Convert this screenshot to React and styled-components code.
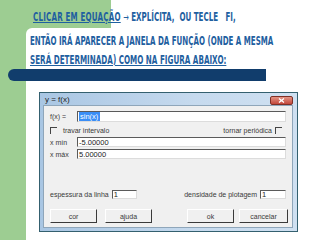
import React from "react";
import styled, { createGlobalStyle } from "styled-components";

const Global = createGlobalStyle`
  html, body { margin: 0; padding: 0; background: #fff; }
  body { width: 320px; height: 240px; overflow: hidden; }
`;

const GREEN = "#9dcd92";

const Page = styled.div`
  width: 320px;
  height: 240px;
  display: flex;
  flex-direction: column;
  background: #fff;
  overflow: hidden;
`;

const TopRow = styled.div`
  height: 28px;
  flex: none;
  box-sizing: border-box;
  padding: 7px 0 0 33px;
  background: linear-gradient(to right, ${GREEN} 0, ${GREEN} 111px, #fff 111px);
`;

const Heading = styled.div`
  font-family: "DejaVu Sans Condensed", "DejaVu Sans", sans-serif;
  font-weight: 700;
  font-size: 12px;
  line-height: ${(p) => p.$lh}px;
  color: #1f60a0;
  white-space: nowrap;
  transform: scaleX(${(p) => p.$sx});
  transform-origin: left center;
`;

const Part = styled.span`
  text-decoration: ${(p) => (p.$under ? "underline" : "none")};
  letter-spacing: ${(p) => p.$ls || 0}px;
`;

const Arrow = styled.span`
  font-size: 11px;
  font-weight: 400;
`;

const Body = styled.div`
  flex: 1;
  display: flex;
  background: ${GREEN};
  padding-left: 26px;
`;

const Panel = styled.div`
  flex: 1;
  background: #fff;
  border-top-left-radius: 6px;
  padding: 4px 0 0 4px;
  display: flex;
  flex-direction: column;
`;

const Bar = styled.div`
  margin-left: -22px;
  width: 258px;
  height: 12px;
  flex: none;
  background: #113d6c;
  border-radius: 6px 0 0 6px;
`;

const Window = styled.div`
  margin: 11px 0 0 9px;
  width: 259px;
  height: 140px;
  flex: none;
  box-sizing: border-box;
  border: 1px solid #34606f;
  background: linear-gradient(to right, #a9c6e3, #c6daee 60%, #cfe0f1);
  padding: 0 4px 3px 3px;
  display: flex;
  flex-direction: column;
`;

const TitleBar = styled.div`
  height: 12px;
  flex: none;
  display: flex;
  align-items: center;
  justify-content: space-between;
`;

const Title = styled.span`
  font-family: "Liberation Sans", Arial, sans-serif;
  font-size: 8px;
  color: #222;
  padding-left: 2px;
`;

const CloseBtn = styled.div`
  width: 21px;
  height: 7px;
  margin-top: 2px;
  background: linear-gradient(#e39484, #c4473b);
  border: 1px solid #7d3026;
  border-radius: 2px;
  display: flex;
  align-items: center;
  justify-content: center;
`;

const Client = styled.div`
  flex: 1;
  background: #f0f0f0;
  border: 1px solid #8fa6ba;
  padding: 5px 6px 4px 6px;
  display: flex;
  flex-direction: column;
  font-family: "Liberation Sans", Arial, sans-serif;
  font-size: 7px;
  color: #3a3a3a;
`;

const Row = styled.div`
  display: flex;
  align-items: center;
  height: ${(p) => p.$h}px;
  margin-top: ${(p) => p.$mt || 0}px;
  flex: none;
`;

const Label = styled.span`
  width: ${(p) => (p.$w ? `${p.$w}px` : "auto")};
  flex: none;
  white-space: nowrap;
`;

const Field = styled.div`
  flex: ${(p) => (p.$w ? "none" : 1)};
  width: ${(p) => (p.$w ? `${p.$w}px` : "auto")};
  height: 100%;
  box-sizing: border-box;
  background: #fff;
  border-top: 1px solid #5a5a5a;
  border-left: 1px solid #5a5a5a;
  border-right: 1px solid #dcdcdc;
  border-bottom: 1px solid #dcdcdc;
  padding-left: 1px;
  display: flex;
  align-items: center;
  font-size: 7.5px;
  color: #222;
  white-space: nowrap;
`;

const Selected = styled.span`
  background: #3a8ef6;
  color: #fff;
  padding: 0 2px 0 1px;
  line-height: 9px;
`;

const Check = styled.span`
  width: 7px;
  height: 7px;
  box-sizing: border-box;
  border-top: 1px solid #444;
  border-left: 1px solid #444;
  flex: none;
`;

const Group = styled.div`
  display: flex;
  align-items: center;
  gap: ${(p) => p.$gap || 0}px;
  height: 100%;
  margin-left: ${(p) => (p.$right ? "auto" : "0")};
  margin-right: ${(p) => p.$mr || 0}px;
`;

const Spacer = styled.div`
  flex: 1;
`;

const Button = styled.div`
  width: ${(p) => p.$w || 47}px;
  height: 14px;
  box-sizing: border-box;
  background: #f0f0f0;
  border-top: 1px solid #fff;
  border-left: 1px solid #fff;
  border-right: 1px solid #3a3a3a;
  border-bottom: 1px solid #3a3a3a;
  display: flex;
  align-items: center;
  justify-content: center;
  color: #3a3a3a;
`;

export default function App() {
  return (
    <>
      <Global />
      <Page>
        <TopRow>
          <Heading $lh={21} $sx={0.66}>
            <Part $under $ls={0.3}>CLICAR EM EQUAÇÃO</Part>
            <Part>
              {" "}
              <Arrow>→</Arrow> EXPLÍCITA,&nbsp; OU TECLE &nbsp; FI,
            </Part>
          </Heading>
        </TopRow>
        <Body>
          <Panel>
            <Heading $lh={19} $sx={0.656}>
              ENTÃO IRÁ APARECER A JANELA DA FUNÇÃO (ONDE A MESMA
            </Heading>
            <Heading $lh={18} $sx={0.666}>
              <Part $under>SERÁ DETERMINADA) COMO NA FIGURA ABAIXO:</Part>
            </Heading>
            <Bar />
            <Window>
              <TitleBar>
                <Title>y = f(x)</Title>
                <CloseBtn>
                  <svg width="7" height="5" viewBox="0 0 7 5">
                    <path d="M1 0.5 L6 4.5 M6 0.5 L1 4.5" stroke="#fff" strokeWidth="1.3" />
                  </svg>
                </CloseBtn>
              </TitleBar>
              <Client>
                <Row $h={11}>
                  <Label $w={27}>f(x) =</Label>
                  <Field>
                    <Selected>sin(x)</Selected>
                  </Field>
                </Row>
                <Row $h={10} $mt={3}>
                  <Group $gap={6}>
                    <Check />
                    <span>travar intervalo</span>
                  </Group>
                  <Group $right $gap={3} $mr={4}>
                    <span>tornar periódica</span>
                    <Check />
                  </Group>
                </Row>
                <Row $h={10} $mt={2}>
                  <Label $w={27}>x mín</Label>
                  <Field>-5.00000</Field>
                </Row>
                <Row $h={10} $mt={2}>
                  <Label $w={27}>x máx</Label>
                  <Field>5.00000</Field>
                </Row>
                <Spacer />
                <Row $h={9}>
                  <Group $gap={3}>
                    <Label>espessura da linha</Label>
                    <Field $w={25}>1</Field>
                  </Group>
                  <Group $right $gap={3}>
                    <Label>densidade de plotagem</Label>
                    <Field $w={26}>1</Field>
                  </Group>
                </Row>
                <Row $h={14} $mt={10}>
                  <Group $gap={8}>
                    <Button>cor</Button>
                    <Button>ajuda</Button>
                  </Group>
                  <Group $right $gap={5} $mr={-2}>
                    <Button>ok</Button>
                    <Button $w={49}>cancelar</Button>
                  </Group>
                </Row>
              </Client>
            </Window>
          </Panel>
        </Body>
      </Page>
    </>
  );
}
